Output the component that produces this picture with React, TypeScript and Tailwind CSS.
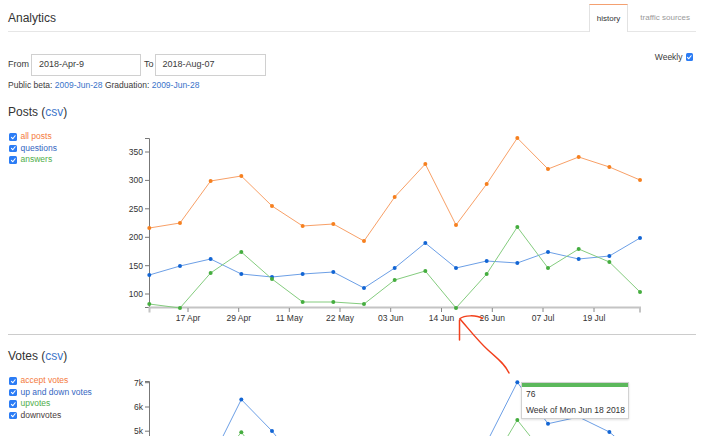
import React from "react";

const X = (i: number) => 149.3 + i * 30.67;

const postsOrange = [228, 223, 181, 176, 206, 226, 224, 241, 197, 164, 225, 184, 138, 169, 157, 167, 180];
const postsBlue = [275, 266, 259, 274, 277, 274, 272, 288, 268, 243, 268, 261, 263, 252, 259, 256, 238];
const postsGreen = [304, 308, 273, 252, 279, 302, 302, 304, 280, 271, 308, 274, 227, 268, 249, 262, 292];

const votesBlue = [480, 480, 461, 399.5, 431, 469, 500, 500, 500, 500, 500, 442.5, 382.3, 423.7, 417, 432, 458];
const votesGreen = [500, 500, 470, 432.3, 470, 500, 500, 500, 500, 500, 500, 472, 420, 458.7, 500, 500, 500];

function Series({ ys, line, dot }: { ys: number[]; line: string; dot: string }) {
  const pts = ys.map((y, i) => `${X(i).toFixed(1)},${y}`).join(" ");
  return (
    <g>
      <polyline points={pts} fill="none" stroke={line} strokeWidth={1} />
      {ys.map((y, i) => (
        <circle key={i} cx={X(i)} cy={y} r={2} fill={dot} />
      ))}
    </g>
  );
}

function Check() {
  return (
    <span className="inline-flex h-[7.5px] w-[7.5px] shrink-0 items-center justify-center rounded-[1.5px] bg-[#2b7cf5]">
      <svg viewBox="0 0 10 10" className="h-[6.5px] w-[6.5px]">
        <path d="M2.2 5.3 L4.3 7.3 L7.9 2.7" fill="none" stroke="white" strokeWidth="1.7" strokeLinecap="round" strokeLinejoin="round" />
      </svg>
    </span>
  );
}

function LegendRow({ label, color }: { label: string; color: string }) {
  return (
    <div className="flex h-[11.5px] items-center gap-[4px] pl-[1px] text-[8.5px]">
      <Check />
      <span style={{ color }}>{label}</span>
    </div>
  );
}

const xTicks = [
  ["17 Apr", 188],
  ["29 Apr", 238.7],
  ["11 May", 289.3],
  ["22 May", 340],
  ["03 Jun", 390.7],
  ["14 Jun", 441.5],
  ["26 Jun", 492.3],
  ["07 Jul", 543],
  ["19 Jul", 594],
] as const;

const yTicksPosts = [
  ["350", 152],
  ["300", 180.4],
  ["250", 208.8],
  ["200", 237.3],
  ["150", 265.7],
  ["100", 294],
] as const;

const yTicksVotes = [
  ["7k", 382.7],
  ["6k", 407],
  ["5k", 431.2],
] as const;

const ORANGE_LINE = "#f8a067";
const ORANGE_DOT = "#f6801f";
const BLUE_LINE = "#6c9fe6";
const BLUE_DOT = "#1265d4";
const GREEN_LINE = "#84cc7e";
const GREEN_DOT = "#45ad3f";

export default function App() {
  return (
    <div className="relative h-[436px] w-[704px] overflow-hidden bg-white font-['Liberation_Sans',Arial,sans-serif] text-[#3a3a3a]">
      <div className="px-2">
        <header className="flex h-[32px] items-stretch justify-between border-b border-[#e6e6e6] pt-[4px]">
          <div className="flex items-center text-[12px] text-[#333]">Analytics</div>
          <div className="flex items-stretch">
            <div className="-mb-px flex items-center border-x border-t-[1.5px] border-x-[#e2e2e2] border-t-[#f4a070] bg-white px-[7px] text-[8px] text-[#333]">
              history
            </div>
            <div className="flex items-center pl-[12px] pr-[6px] text-[8px] text-[#9a9a9a]">traffic sources</div>
          </div>
        </header>

        <div className="mt-[20px] flex justify-between">
          <div>
            <div className="mt-[2px] flex items-center text-[9px]">
              <span>From</span>
              <div className="ml-[2px] flex h-[22px] w-[110px] items-center border border-[#d0d0d0] px-[7px]">2018-Apr-9</div>
              <span className="ml-[3px] mr-[1px]">To</span>
              <div className="flex h-[22px] w-[111px] items-center border border-[#d0d0d0] px-[7px]">2018-Aug-07</div>
            </div>
            <div className="mt-[4px] text-[8.5px] leading-[10px]">
              Public beta: <span className="text-[#3a74c9]">2009-Jun-28</span> Graduation:{" "}
              <span className="text-[#3a74c9]">2009-Jun-28</span>
            </div>
          </div>
          <div className="mr-[3px] flex h-[10px] items-center gap-[3px] text-[8.5px]">
            <span>Weekly</span>
            <Check />
          </div>
        </div>

        <div className="mt-[15px] text-[12px] leading-[14px] text-[#333]">
          Posts (<span className="text-[#3a74c9]">csv</span>)
        </div>

        <div className="mt-[12px] flex items-start">
          <div className="w-[112px]">
            <LegendRow label="all posts" color="#f47a3c" />
            <LegendRow label="questions" color="#3567c2" />
            <LegendRow label="answers" color="#4fae4a" />
          </div>
          <svg width={560} height={203} viewBox="120 131 560 203" className="block">
            <g fontSize="8.5" fill="#333" fontFamily="'Liberation Sans', Arial, sans-serif">
              {yTicksPosts.map(([t, y]) => (
                <g key={t}>
                  <line x1={145} x2={149.5} y1={y} y2={y} stroke="#777" strokeWidth={1} />
                  <text x={143} y={y + 3} textAnchor="end">
                    {t}
                  </text>
                </g>
              ))}
              <path d="M145,138.5 H149.5 V307.5 H145" fill="none" stroke="#777" strokeWidth={1} />
              <path d="M149.5,312.5 V307.5 H640 V312.5" fill="none" stroke="#c4c4c4" strokeWidth={2} />
              {xTicks.map(([t, x]) => (
                <g key={t}>
                  <line x1={x} x2={x} y1={308} y2={312} stroke="#888" strokeWidth={1} />
                  <text x={x} y={321} textAnchor="middle">
                    {t}
                  </text>
                </g>
              ))}
            </g>
            <Series ys={postsOrange} line={ORANGE_LINE} dot={ORANGE_DOT} />
            <Series ys={postsBlue} line={BLUE_LINE} dot={BLUE_DOT} />
            <Series ys={postsGreen} line={GREEN_LINE} dot={GREEN_DOT} />
          </svg>
        </div>

        <div className="border-t border-[#cccccc] pt-[14px]">
          <div className="text-[12px] leading-[14px] text-[#333]">
            Votes (<span className="text-[#3a74c9]">csv</span>)
          </div>
          <div className="mt-[12px] flex items-start">
            <div className="w-[112px]">
              <LegendRow label="accept votes" color="#f47a3c" />
              <LegendRow label="up and down votes" color="#3567c2" />
              <LegendRow label="upvotes" color="#4fae4a" />
              <LegendRow label="downvotes" color="#4a3c3c" />
            </div>
            <svg width={560} height={80} viewBox="120 375 560 80" className="block">
              <g fontSize="8.5" fill="#333" fontFamily="'Liberation Sans', Arial, sans-serif">
                {yTicksVotes.map(([t, y]) => (
                  <g key={t}>
                    <line x1={145} x2={149.5} y1={y} y2={y} stroke="#777" strokeWidth={1} />
                    <text x={143} y={y + 3} textAnchor="end">
                      {t}
                    </text>
                  </g>
                ))}
                <path d="M145,381.5 H149.5 V460" fill="none" stroke="#777" strokeWidth={1} />
              </g>
              <Series ys={votesGreen} line={GREEN_LINE} dot={GREEN_DOT} />
              <Series ys={votesBlue} line={BLUE_LINE} dot={BLUE_DOT} />
            </svg>
          </div>
        </div>
      </div>

      {/* tooltip */}
      <div className="absolute left-[521px] top-[382px] w-[108px] border border-[#d2d2d2] bg-white shadow-[0_1px_2px_rgba(0,0,0,0.12)]">
        <div className="h-[4px] bg-[#5cb85c]" />
        <div className="whitespace-nowrap px-[4px] pb-[2px] pt-[1px] text-[8.5px] leading-[12px] text-[#333]">
          <div>76</div>
          <div className="mt-[4px]">Week of Mon Jun 18 2018</div>
        </div>
      </div>

      {/* red annotation arrow */}
      <svg className="pointer-events-none absolute left-0 top-0" width={704} height={436} viewBox="0 0 704 436">
        <g fill="none" stroke="#f2401c" strokeWidth={1.5} strokeLinecap="round" strokeLinejoin="round">
          <path d="M460,319 C468,328 478,341 488,350 C497,358 505,364 509,373" />
          <path d="M459.5,320 V340" />
          <path d="M460,318.5 C464,315.5 476,314.5 482.5,318.5" />
        </g>
      </svg>
    </div>
  );
}
